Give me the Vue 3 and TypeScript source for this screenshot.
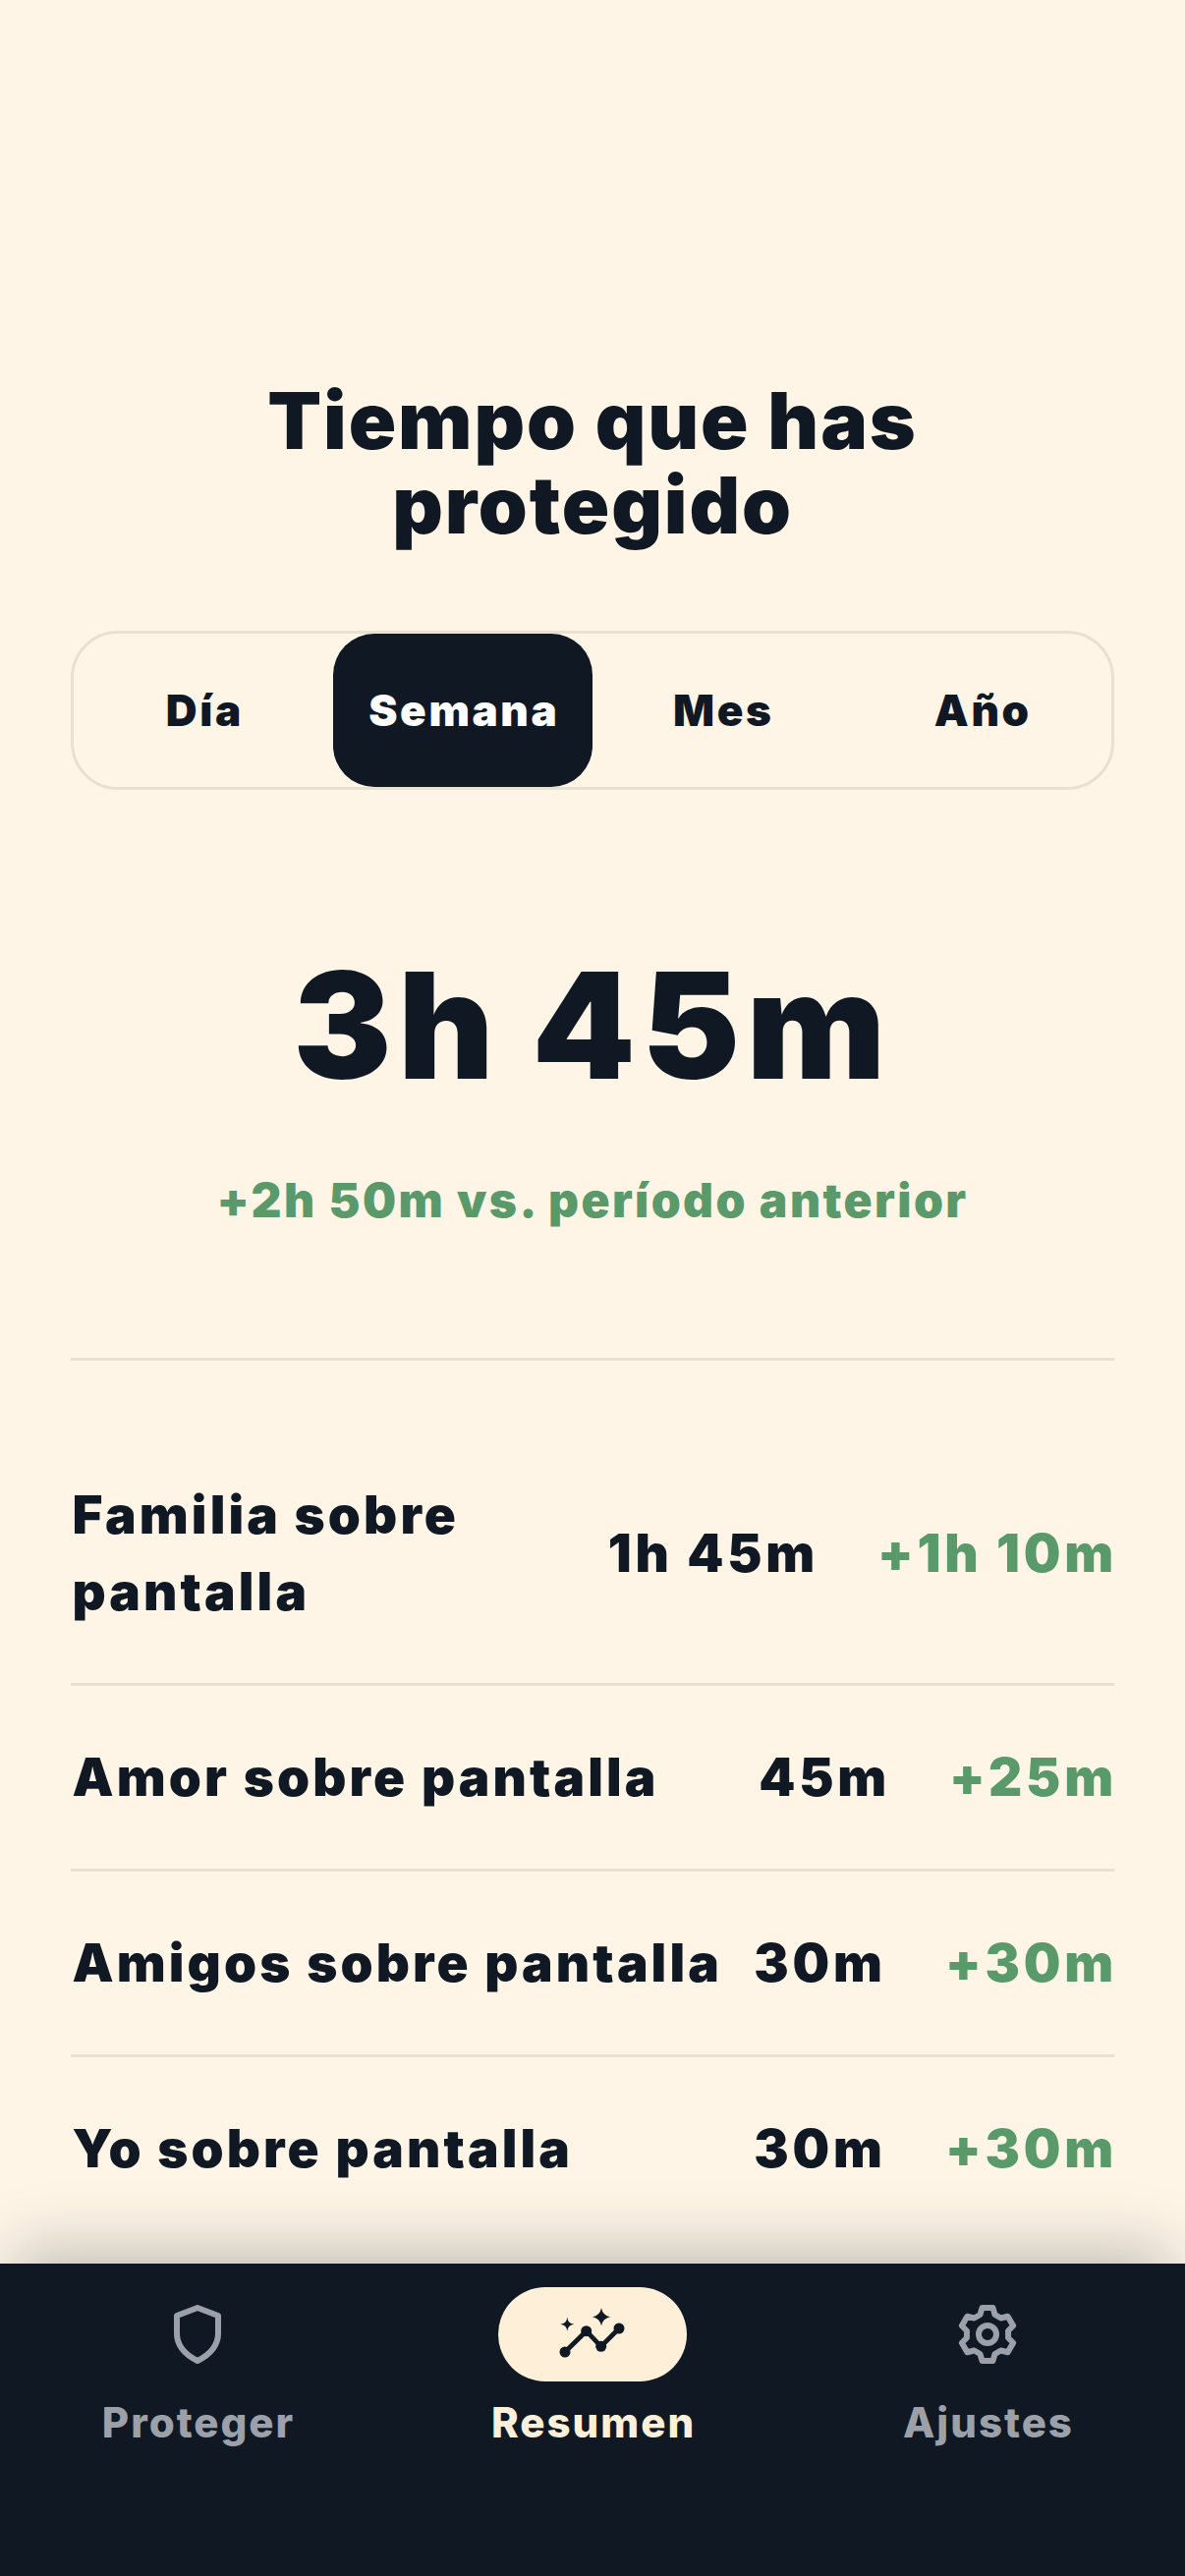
<script setup lang="ts">
const tabs = ['Día', 'Semana', 'Mes', 'Año']
const rows = [
  { n: 'Familia sobre pantalla', t: '1h 45m', d: '+1h 10m' },
  { n: 'Amor sobre pantalla', t: '45m', d: '+25m' },
  { n: 'Amigos sobre pantalla', t: '30m', d: '+30m' },
  { n: 'Yo sobre pantalla', t: '30m', d: '+30m' },
]
const tooth: [number, number][] = [[-7.5, -20], [-5.5, -27], [5.5, -27], [7.5, -20]]
const gearPath = Array.from({ length: 6 }, (_, i) => {
  const a = (i * Math.PI) / 3
  return tooth
    .map(([x, y]) => `${(30 + x * Math.cos(a) - y * Math.sin(a)).toFixed(2)} ${(30 + x * Math.sin(a) + y * Math.cos(a)).toFixed(2)}`)
    .join(' L')
}).join(' L')
const gearD = `M${gearPath}Z`
</script>
<template>
  <div class="page">
    <main class="main">
      <h1 class="title">Tiempo que has<br />protegido</h1>
      <div class="tabs">
        <div v-for="t in tabs" :key="t" class="tab" :class="{ on: t === 'Semana' }">{{ t }}</div>
      </div>
      <div class="big">3h 45m</div>
      <div class="cmp">+2h 50m vs. período anterior</div>
      <div class="list">
        <div v-for="r in rows" :key="r.n" class="row">
          <div class="n">{{ r.n }}</div>
          <div class="t">{{ r.t }}</div>
          <div class="d">{{ r.d }}</div>
        </div>
      </div>
    </main>
    <nav class="nav">
      <div class="item">
        <div class="ic">
          <svg width="60" height="60" viewBox="0 0 60 60" fill="none" stroke="#9ca0a8" stroke-width="6" stroke-linejoin="round"><path d="M30 3 51 11V29C51 42 42 51 30 57 18 51 9 42 9 29V11Z"/></svg>
        </div>
        <div class="lab">Proteger</div>
      </div>
      <div class="item active">
        <div class="ic pill">
          <svg width="72" height="60" viewBox="0 0 72 60" fill="#101824"><path d="M45 3.300Q46.500 10.800 54 12.300 46.500 13.800 45 21.300 43.500 13.800 36 12.300 43.500 10.800 45 3.300Z"/><path d="M10.300 12.700Q11 19 17.300 19.700 11 20.400 10.300 26.700 9.600 20.400 3.300 19.700 9.600 19 10.300 12.700Z"/><path d="M8 48 29.700 26.700 44.700 42.300 63 24" fill="none" stroke="#101824" stroke-width="4.700" stroke-linecap="round" stroke-linejoin="round"/><circle cx="8" cy="48" r="5.500"/><circle cx="29.700" cy="26.700" r="5.500"/><circle cx="44.700" cy="42.300" r="5.500"/><circle cx="63" cy="24" r="5.500"/></svg>
        </div>
        <div class="lab">Resumen</div>
      </div>
      <div class="item">
        <div class="ic">
          <svg width="60" height="60" viewBox="0 0 60 60" fill="none" stroke="#9ca0a8" stroke-width="6" stroke-linejoin="round"><path :d="gearD"/><circle cx="30" cy="30" r="9"/></svg>
        </div>
        <div class="lab">Ajustes</div>
      </div>
    </nav>
  </div>
</template>
<style>
html, body { margin: 0; background: #fef5e7; }
</style>
<style scoped>
.page { width: 1206px; height: 2622px; background: #fef5e7; display: flex; flex-direction: column; font-family: Inter, "Liberation Sans", sans-serif; color: #101824; overflow: hidden; }
.main { flex: 1; min-height: 0; padding: 385px 72px 0; display: flex; flex-direction: column; }
.title { margin: 0; text-align: center; font-size: 80px; line-height: 86px; font-weight: 900; letter-spacing: 1.9px; }
.tabs { margin-top: 85px; height: 162px; box-sizing: border-box; border: 3px solid #e8e0d2; border-radius: 48px; display: grid; grid-template-columns: repeat(4, 1fr); }
.tab { display: flex; align-items: center; justify-content: center; padding-left: 2.6px; font-size: 44px; font-weight: 900; letter-spacing: 2.6px; border-radius: 42px; }
.tab.on { background: #101824; color: #fff; }
.big { margin-top: 150px; text-align: center; font-size: 150px; line-height: 180px; font-weight: 900; letter-spacing: 6.5px; word-spacing: -4px; }
.cmp { margin-top: 58px; text-align: center; font-size: 48px; font-weight: 900; color: #5a9a6a; letter-spacing: 2.4px; }
.list { margin-top: 131px; border-top: 3px solid #e8e0d2; }
.row { display: flex; align-items: center; min-height: 189px; border-bottom: 3px solid #e8e0d2; box-sizing: border-box; font-size: 53px; font-weight: 900; line-height: 78px; letter-spacing: 3.1px; }
.row:first-child { padding: 118px 0 54px; min-height: 331px; }
.row:last-child { border-bottom-color: transparent; }
.n { flex: none; margin-left: 1.5px; white-space: nowrap; }
.row:first-child .n { width: 460px; white-space: normal; }
.t { margin-left: auto; letter-spacing: 3.8px; }
.d { margin-left: 60px; color: #5a9a6a; margin-right: -3px; letter-spacing: 3.8px; }
.nav { flex: none; height: 318px; background: #101824; box-shadow: 0 -30px 60px -16px rgba(16,24,36,.25); display: grid; grid-template-columns: repeat(3, 1fr); padding: 24px 0 0; box-sizing: border-box; position: relative; }
.item { display: flex; flex-direction: column; align-items: center; }
.ic { height: 96px; width: 192px; display: flex; align-items: center; justify-content: center; }
.pill { background: #fef0d8; border-radius: 48px; }
.lab { margin-top: 16px; font-size: 42px; font-weight: 800; color: #9ca0a8; letter-spacing: 2px; text-indent: 2px; }
.active .lab { color: #fef0d8; }
</style>
